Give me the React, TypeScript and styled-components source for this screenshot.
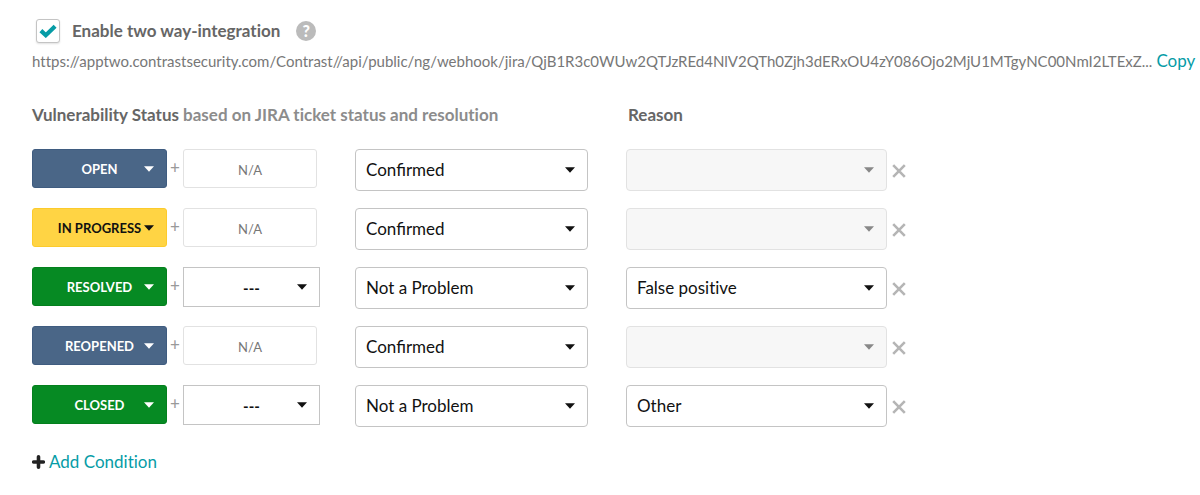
import React, { useState } from "react";
import styled, { createGlobalStyle } from "styled-components";

const GlobalStyle = createGlobalStyle`
  * { box-sizing: border-box; }
  body {
    margin: 0;
    background: #fff;
    color: #111;
    font-family: Lato, "Liberation Sans", sans-serif;
    font-size: 17px;
    font-variant-ligatures: none;
  }
`;

const TEAL = "#069ca6";

const Page = styled.main`
  padding: 19px 4px 20px 32px;
`;

const ToggleRow = styled.div`
  display: flex;
  align-items: center;
  height: 24px;
  padding-left: 4px;
`;

const ToggleLabel = styled.label`
  display: flex;
  align-items: center;
  gap: 12px;
  color: #666;
  font-weight: 700;
  line-height: 24px;
`;

const CheckMark = styled.span`
  display: grid;
  width: 24px;
  height: 24px;

  > * {
    grid-area: 1 / 1;
  }

  svg {
    margin: auto;
    pointer-events: none;
  }
`;

const CheckInput = styled.input`
  appearance: none;
  width: 24px;
  height: 24px;
  margin: 0;
  border: 1px solid #c4c4c4;
  border-radius: 3px;
  background: #fff;
  box-shadow: 0 1px 2px rgba(0, 0, 0, 0.12);
`;

const HelpButton = styled.button`
  width: 20px;
  height: 20px;
  margin-left: 16px;
  padding: 0;
  border: 0;
  border-radius: 50%;
  background: #bbb;
  color: #fff;
  font: 900 16px/20px Lato, sans-serif;
  text-align: center;
`;

const UrlRow = styled.div`
  display: flex;
  align-items: baseline;
  gap: 4px;
  margin-top: 6px;
  line-height: 24px;
`;

const Url = styled.span`
  min-width: 0;
  overflow: hidden;
  color: #777;
  font-size: 15px;
  text-overflow: ellipsis;
  white-space: nowrap;
`;

const LinkText = styled.a`
  color: ${TEAL};
  text-decoration: none;
`;

const columns = `
  display: grid;
  grid-template-columns:
    minmax(0, 135px) 16px minmax(0, 172px) minmax(0, 271px) minmax(0, 261px) 24px;
`;

const Headings = styled.div`
  ${columns}
  margin-top: 30px;
  color: #666;
  font-weight: 700;
  line-height: 24px;
`;

const StatusHeading = styled.div`
  grid-column: 1 / 5;
`;

const Muted = styled.span`
  color: #8c8c8c;
`;

const ReasonHeading = styled.div`
  padding-left: 2px;
`;

const Conditions = styled.div`
  display: flex;
  flex-direction: column;
  gap: 17px;
  margin-top: 22px;
`;

const Condition = styled.div`
  ${columns}
  height: 42px;
`;

const Field = styled.div<{ $gapAfter?: number; $caret?: string }>`
  display: grid;
  align-self: start;
  align-items: center;
  margin-right: ${(p) => p.$gapAfter ?? 0}px;
  color: ${(p) => p.$caret ?? "#111"};

  > * {
    grid-area: 1 / 1;
  }

  svg {
    justify-self: end;
    margin-right: 13px;
    pointer-events: none;
  }
`;

const BaseSelect = styled.select`
  appearance: none;
  width: 100%;
  min-width: 0;
  margin: 0;
  font-family: inherit;
  opacity: 1;
`;

type Tone = "blue" | "yellow" | "green";

const tones: Record<Tone, { fill: string; edge: string; text: string }> = {
  blue: { fill: "#4a6687", edge: "#3f5c80", text: "#fff" },
  yellow: { fill: "#ffd444", edge: "#fccb2c", text: "#111" },
  green: { fill: "#068a23", edge: "#04801d", text: "#fff" },
};

const StatusSelect = styled(BaseSelect)<{ $tone: Tone }>`
  height: 39px;
  padding: 0;
  border: 1px solid ${(p) => tones[p.$tone].edge};
  border-radius: 3px;
  background: ${(p) => tones[p.$tone].fill};
  color: ${(p) => tones[p.$tone].text};
  font-size: 13px;
  font-weight: 700;
  text-align: center;
  text-align-last: center;
`;

const Plus = styled.span`
  color: #999;
  line-height: 38px;
  text-align: center;
`;

const EmptyResolution = styled.input`
  width: calc(100% - 38px);
  height: 39px;
  padding: 2px 0 0;
  border: 1px solid #e2e2e2;
  border-radius: 3px;
  background: #fff;
  color: #777;
  font-family: inherit;
  font-size: 13px;
  text-align: center;
`;

const ResolutionSelect = styled(BaseSelect)`
  height: 40px;
  padding: 2px 0 0;
  border: 1px solid #c4c4c4;
  border-radius: 0;
  background: #fff;
  color: #111;
  font-size: 15px;
  font-weight: 700;
  text-align: center;
  text-align-last: center;
`;

const ValueSelect = styled(BaseSelect)`
  height: 42px;
  padding: 0 32px 2px 10px;
  border: 1px solid #c4c4c4;
  border-radius: 4px;
  background: #fff;
  color: #111;
  font-size: 17px;

  &:disabled {
    border-color: #e2e2e2;
    background: #f7f7f7;
  }
`;

const ReasonSelect = styled(ValueSelect)`
  font-variant-ligatures: none;
`;

const RemoveButton = styled.button`
  display: flex;
  align-items: center;
  justify-content: center;
  height: 44px;
  padding: 0;
  border: 0;
  background: none;
  color: #b5b5b5;
`;

const AddButton = styled.button`
  display: flex;
  align-items: center;
  gap: 4px;
  margin-top: 23px;
  padding: 0;
  border: 0;
  background: none;
  color: ${TEAL};
  font: 17px/24px Lato, sans-serif;
  font-variant-ligatures: none;

  svg {
    color: #222;
  }
`;

const Caret = () => (
  <svg width="10" height="6" viewBox="0 0 10 6" aria-hidden="true">
    <path d="M0 0.3H10L5 5.7Z" fill="currentColor" />
  </svg>
);

interface Row {
  status: string;
  tone: Tone;
  resolution?: string;
  value: string;
  reason?: string;
}

const initialRows: Row[] = [
  { status: "OPEN", tone: "blue", value: "Confirmed" },
  { status: "IN PROGRESS", tone: "yellow", value: "Confirmed" },
  { status: "RESOLVED", tone: "green", resolution: "---", value: "Not a Problem", reason: "False positive" },
  { status: "REOPENED", tone: "blue", value: "Confirmed" },
  { status: "CLOSED", tone: "green", resolution: "---", value: "Not a Problem", reason: "Other" },
];

export default function App() {
  const [enabled, setEnabled] = useState(true);
  const [rows, setRows] = useState(initialRows);

  return (
    <Page>
      <GlobalStyle />
      <ToggleRow>
        <ToggleLabel>
          <CheckMark>
            <CheckInput
              type="checkbox"
              checked={enabled}
              onChange={(e) => setEnabled(e.target.checked)}
            />
            {enabled && (
              <svg width="18" height="14" viewBox="0 0 18 14" aria-hidden="true">
                <path d="M1.9 6.6L6.8 11.2L16.1 2.2" fill="none" stroke={TEAL} strokeWidth="4.2" />
              </svg>
            )}
          </CheckMark>
          Enable two way-integration
        </ToggleLabel>
        <HelpButton type="button" aria-label="Help">?</HelpButton>
      </ToggleRow>
      <UrlRow>
        <Url>
          https://apptwo.contrastsecurity.com/Contrast//api/public/ng/webhook/jira/QjB1R3c0WUw2QTJzREd4NlV2QTh0Zjh3dERxOU4zY086Ojo2MjU1MTgyNC00NmI2LTExZ...
        </Url>
        <LinkText href="#copy">Copy</LinkText>
      </UrlRow>

      <Headings>
        <StatusHeading>
          Vulnerability Status <Muted>based on JIRA ticket status and resolution</Muted>
        </StatusHeading>
        <ReasonHeading>Reason</ReasonHeading>
      </Headings>

      <Conditions>
        {rows.map((row) => (
          <Condition key={row.status}>
            <Field $caret={tones[row.tone].text}>
              <StatusSelect $tone={row.tone} aria-label="Ticket status" defaultValue={row.status}>
                <option>{row.status}</option>
              </StatusSelect>
              <Caret />
            </Field>
            <Plus>+</Plus>
            {row.resolution ? (
              <Field $gapAfter={35}>
                <ResolutionSelect aria-label="Resolution" defaultValue={row.resolution}>
                  <option>{row.resolution}</option>
                </ResolutionSelect>
                <Caret />
              </Field>
            ) : (
              <EmptyResolution aria-label="Resolution" value="N/A" disabled readOnly />
            )}
            <Field $gapAfter={38}>
              <ValueSelect aria-label="Vulnerability status" defaultValue={row.value}>
                <option>Confirmed</option>
                <option>Not a Problem</option>
              </ValueSelect>
              <Caret />
            </Field>
            <Field $caret={row.reason ? "#111" : "#888"}>
              <ReasonSelect aria-label="Reason" defaultValue={row.reason ?? ""} disabled={!row.reason}>
                {row.reason ? <option>{row.reason}</option> : <option value="" />}
              </ReasonSelect>
              <Caret />
            </Field>
            <RemoveButton
              type="button"
              aria-label={`Remove ${row.status}`}
              onClick={() => setRows(rows.filter((r) => r !== row))}
            >
              <svg width="14" height="14" viewBox="0 0 14 14" aria-hidden="true">
                <path d="M1.2 1.2L12.8 12.8M12.8 1.2L1.2 12.8" stroke="currentColor" strokeWidth="2.6" />
              </svg>
            </RemoveButton>
          </Condition>
        ))}
      </Conditions>

      <AddButton type="button">
        <svg width="13" height="14" viewBox="0 0 13 14" aria-hidden="true">
          <path d="M6.5 1.8V12.2M1.7 7H11.3" stroke="currentColor" strokeWidth="3.6" strokeLinecap="round" />
        </svg>
        Add Condition
      </AddButton>
    </Page>
  );
}
